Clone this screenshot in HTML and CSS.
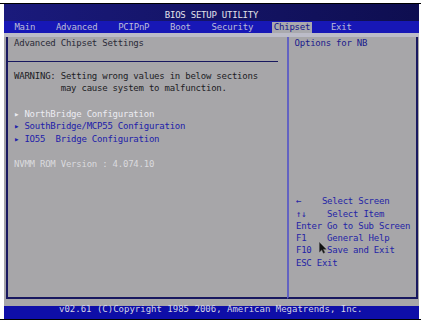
FILE: index.html
```html
<!DOCTYPE html>
<html lang="en">
<head>
    <meta charset="UTF-8">
    <title>BIOS Setup Utility - Chipset</title>
    <link rel="stylesheet" href="styles.css">
</head>
<body>
    <div class="monitor">
        <div class="screen">
            <div class="title-bar">BIOS SETUP UTILITY</div>

            <div class="menu-bar">
                <span class="menu-item">Main</span>
                <span class="menu-item">Advanced</span>
                <span class="menu-item">PCIPnP</span>
                <span class="menu-item">Boot</span>
                <span class="menu-item">Security</span>
                <span class="menu-item active">Chipset</span>
                <span class="menu-item">Exit</span>
            </div>

            <div class="panels">
                <div class="panel-main">
                    <div class="panel-title">Advanced Chipset Settings</div>
                    <div class="rule"></div>
                    <div class="warning">WARNING: Setting wrong values in below sections
         may cause system to malfunction.</div>

                    <div class="links">
                        <div class="link selected">▸ NorthBridge Configuration</div>
                        <div class="link">▸ SouthBridge/MCP55 Configuration</div>
                        <div class="link">▸ IO55  Bridge Configuration</div>
                    </div>

                    <div class="version">NVMM ROM Version : 4.074.10</div>
                </div>

                <div class="panel-help">
                    <div class="help-title">Options for NB</div>
                    <!-- key help -->
                    <div class="help-keys">←    Select Screen
↑↓    Select Item
Enter Go to Sub Screen
F1    General Help
F10   Save and Exit
ESC Exit</div>
                </div>
            </div>

            <div class="footer">v02.61 (C)Copyright 1985 2006, American Megatrends, Inc.</div>
        </div>

        <svg class="cursor" width="8" height="12" viewBox="0 0 8 12">
            <path d="M0.5 0.5 L0.5 10 L2.8 7.8 L4.4 11.2 L5.8 10.6 L4.2 7.2 L7.2 7.2 Z" fill="#111" stroke="#444" stroke-width="0.5"/>
        </svg>
    </div>
</body>
</html>
```

FILE: styles.css
```css
:root {
    --navy: #18185f;
    --bg-gray: #a7a6a9;
    --help-blue: #2424a6;
}

* {
    box-sizing: border-box;
}

body {
    margin: 0;
    background: #fff;
    font-family: "DejaVu Sans Mono", "Liberation Mono", monospace;
    font-size: 9px;
    letter-spacing: -0.23px;
}

.monitor {
    position: relative;
    width: 421px;
    margin-top: 3px;
    padding-left: 4px;
    border-top: 1px solid #000;
    border-bottom: 1px solid #000;
}

.screen {
    width: 415px;
    height: 315px;
    display: flex;
    flex-direction: column;
    background: var(--bg-gray);
}

.title-bar {
    height: 17px;
    padding-top: 6px;
    line-height: 11px;
    text-align: center;
    color: #e2e2ea;
    background: linear-gradient(to right, #1a1a7c, #0e0e50);
}

.menu-bar {
    height: 12px;
    padding: 1px 0 0 10.38px;
    line-height: 11px;
    display: flex;
    gap: 20.76px;
    background: #1717b6;
    color: #bcbcd8;
}

.menu-item.active {
    margin: 0 -2px;
    padding: 0 2px;
    background: #a9a9ae;
    color: #12128a;
}

.panels {
    flex: 1;
    display: flex;
    padding: 0 1px 7px 2px;
    border-top: 4px solid #bcbcc8;
}

.panel-main {
    width: 281px;
    padding-left: 6px;
    border-left: 2px solid var(--navy);
    border-bottom: 2px solid var(--navy);
    line-height: 12.6px;
}

.panel-title {
    color: #2a2a38;
}

.rule {
    height: 1px;
    margin: 11.4px 9px 0 -8px;
    background: var(--navy);
}

.warning {
    margin-top: 7.9px;
    white-space: pre;
    color: #1c1c24;
}

.links {
    margin-top: 12.6px;
    color: #2020aa;
}

.link {
    white-space: pre;
}

.link.selected {
    color: #ececf2;
}

.version {
    margin-top: 12.6px;
    color: #dadade;
}

.panel-help {
    flex: 1;
    display: flex;
    flex-direction: column;
    padding-left: 5.6px;
    border-left: 2px solid #6262c2;
    border-right: 2px solid var(--navy);
    border-bottom: 2px solid var(--navy);
}

.help-title {
    line-height: 12.6px;
    color: #1a1a8c;
}

.help-keys {
    margin: auto 0 0 1.4px;
    padding-bottom: 28px;
    line-height: 12.3px;
    white-space: pre;
    color: var(--help-blue);
}

.footer {
    height: 13px;
    padding-left: 55px;
    line-height: 7px;
    letter-spacing: 0;
    background: #0e0ea8;
    color: #d4d4e6;
    white-space: nowrap;
}

.cursor {
    position: absolute;
    left: 319px;
    top: 238px;
}
```
